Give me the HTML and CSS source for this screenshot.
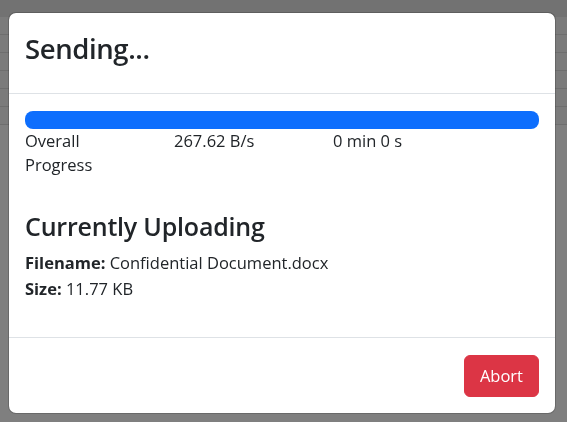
FILE: index.html
```html
<!DOCTYPE html>
<html lang="en">
<head>
<meta charset="utf-8">
<title>Sending...</title>
<link rel="stylesheet" href="styles.css">
</head>
<body>
<div class="page">
  <div class="topbar"></div>
  <div class="trow"></div>
  <div class="trow"></div>
  <div class="trow"></div>
  <div class="trow"></div>
  <div class="trow"></div>
  <div class="trow"></div>
</div>
<div class="backdrop"></div>
<div class="modal">
  <div class="modal-content">
    <div class="modal-header">
      <h1 class="modal-title">Sending...</h1>
    </div>
    <div class="modal-body">
      <div class="progress"><div class="progress-bar" style="width:100%"></div></div>
      <div class="stats">
        <div>Overall Progress</div>
        <div>267.62 B/s</div>
        <div>0 min 0 s</div>
      </div>
      <h4 class="section-title">Currently Uploading</h4>
      <p class="info"><b>Filename:</b> Confidential Document.docx<br><b>Size:</b> 11.77 KB</p>
    </div>
    <div class="modal-footer">
      <button class="btn btn-danger" type="button">Abort</button>
    </div>
  </div>
</div>
</body>
</html>
```
FILE: styles.css
```css
* { box-sizing: border-box; }
html, body { margin: 0; padding: 0; }
body {
  font-family: "Open Sans", "Noto Sans", "Liberation Sans", sans-serif;
  font-size: 16.5px;
  line-height: 24px;
  color: #212529;
  background: #fff;
  width: 567px;
  height: 422px;
  overflow: hidden;
}
.page { display: flex; flex-direction: column; }
.topbar { height: 17px; background: #e4e4e4; }
.trow { height: 18px; border-bottom: 1px solid #dcdcdc; background: #f6f6f6; }
.backdrop {
  position: fixed;
  inset: 0;
  background: rgba(0, 0, 0, 0.5);
}
.modal {
  position: fixed;
  top: 12px;
  left: 8px;
  width: 548px;
}
.modal-content {
  display: flex;
  flex-direction: column;
  background: #fff;
  border: 1px solid rgba(0, 0, 0, 0.175);
  border-radius: 8px;
  background-clip: padding-box;
}
.modal-header {
  padding: 12px 16px 20px;
  border-bottom: 1px solid #dee2e6;
}
.modal-title {
  margin: 0;
  font-size: 27.5px;
  font-weight: 600;
  line-height: 48px;
  letter-spacing: -0.4px;
}
.modal-body {
  padding: 17px 16px 35px;
  display: flex;
  flex-direction: column;
}
.progress {
  height: 18px;
  background: #e9ecef;
  border-radius: 8px;
  overflow: hidden;
  display: flex;
}
.progress-bar { background: #0d6efd; }
.stats {
  display: grid;
  grid-template-columns: 110px 120px 1fr;
  column-gap: 39px;
}
.section-title {
  margin: 34px 0 9px;
  font-size: 25px;
  font-weight: 600;
  line-height: 30px;
  letter-spacing: -0.2px;
}
.info { margin: 0; line-height: 26px; }
.info b { font-weight: 700; }
.modal-footer {
  display: flex;
  justify-content: flex-end;
  padding: 12px;
  border-top: 1px solid #dee2e6;
}
.btn {
  margin: 5px 4px 4px;
  height: 42px;
  padding: 0 15px;
  font-family: inherit;
  font-size: 16.5px;
  line-height: 24px;
  border: 1px solid transparent;
  border-radius: 6px;
  cursor: pointer;
}
.btn-danger { background: #dc3545; border-color: #dc3545; color: #fff; }
```
